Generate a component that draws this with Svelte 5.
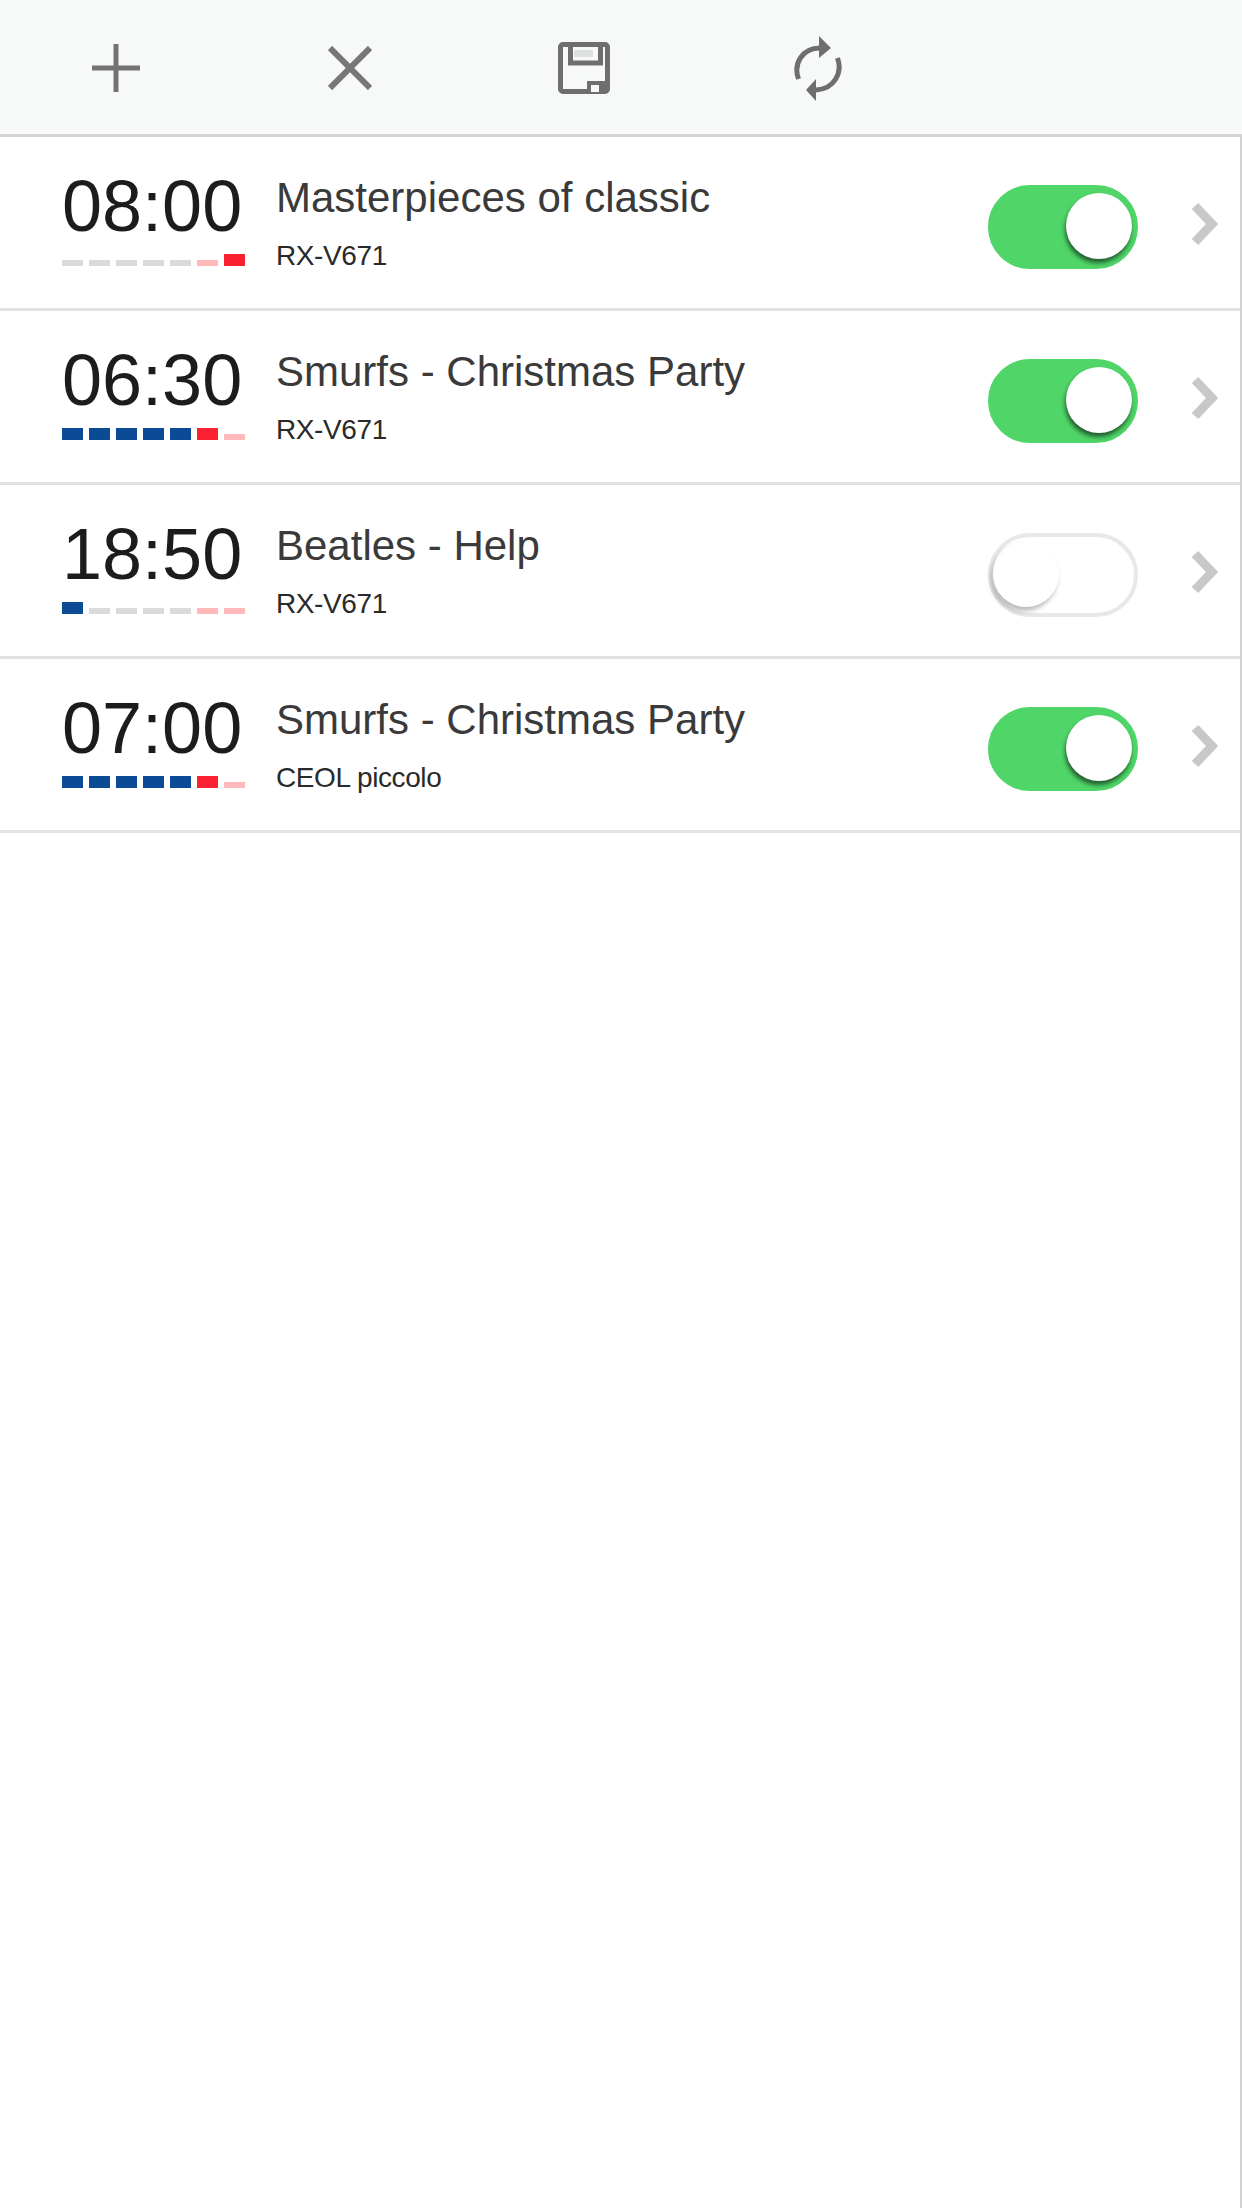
<script lang="ts">
	type Alarm = {
		time: string;
		title: string;
		device: string;
		on: boolean;
		days: string[];
	};

	// b = active weekday, g = off weekday, r = active weekend, p = off weekend
	const alarms: Alarm[] = [
		{ time: "08:00", title: "Masterpieces of classic", device: "RX-V671", on: true, days: ["g", "g", "g", "g", "g", "p", "r"] },
		{ time: "06:30", title: "Smurfs - Christmas Party", device: "RX-V671", on: true, days: ["b", "b", "b", "b", "b", "r", "p"] },
		{ time: "18:50", title: "Beatles - Help", device: "RX-V671", on: false, days: ["b", "g", "g", "g", "g", "p", "p"] },
		{ time: "07:00", title: "Smurfs - Christmas Party", device: "CEOL piccolo", on: true, days: ["b", "b", "b", "b", "b", "r", "p"] },
	];
</script>

<div class="page">
	<header class="toolbar">
		<button class="tool" aria-label="Add">
			<svg width="50" height="50" viewBox="0 0 50 50"><path d="M25 1v48M1 25h48" stroke="#737373" fill="none" stroke-width="5" /></svg>
		</button>
		<button class="tool" aria-label="Delete">
			<svg width="44" height="44" viewBox="0 0 44 44"><path d="M2 2l40 40M42 2L2 42" stroke="#777" fill="none" stroke-width="6" /></svg>
		</button>
		<button class="tool" aria-label="Save">
			<svg width="52" height="52" viewBox="0 0 52 52">
				<rect x="2.500" y="2.500" width="47" height="47" rx="2.500" stroke="#6e6e6e" fill="none" stroke-width="5" />
				<path d="M12.500 2v19h30V2" stroke="#6e6e6e" fill="none" stroke-width="5" />
				<rect x="16" y="8" width="19" height="7" fill="#dfe1e1" />
				<rect x="29" y="39" width="20" height="11" fill="#6e6e6e" />
				<rect x="33" y="43" width="8" height="7" fill="#f7f9f9" />
			</svg>
		</button>
		<button class="tool" aria-label="Refresh">
			<svg width="48" height="65" viewBox="0 0 48 65">
				<path d="M4.500 43C-1 28 8 12 26 12" stroke="#6e6e6e" fill="none" stroke-width="5" />
				<path d="M43.500 22C49 37 40 53 22 54" stroke="#6e6e6e" fill="none" stroke-width="5" />
				<path d="M25 0l12 12-12 10zM22 65L12 54l10-11z" fill="#6e6e6e" />
			</svg>
		</button>
	</header>

	<ul class="list">
		{#each alarms as alarm}
			<li class="row">
				<div class="when">
					<div class="time">{alarm.time}</div>
					<div class="days">
						{#each alarm.days as d}
							<span class="day {d}"></span>
						{/each}
					</div>
				</div>
				<div class="info">
					<div class="title">{alarm.title}</div>
					<div class="device">{alarm.device}</div>
				</div>
				<div class="toggle" class:on={alarm.on}><span class="knob"></span></div>
				<svg class="chevron" width="30" height="44" viewBox="0 0 30 44">
					<path d="M5 4l17 18L5 40" stroke="#c8c8c8" fill="none" stroke-width="9" />
				</svg>
			</li>
		{/each}
	</ul>
</div>

<style>
	:global(body) {
		margin: 0;
		background: #fff;
	}

	.page {
		height: 2208px;
		box-sizing: border-box;
		border-right: 2px solid #d2d2d2;
		font-family: "Liberation Sans", Arial, sans-serif;
	}

	.toolbar {
		display: flex;
		align-items: center;
		box-sizing: content-box;
		height: 132px;
		padding: 2px 0 0 86px;
		gap: 174px;
		background: #f7f9f9;
		border-bottom: 3px solid #d4d4d4;
		margin-right: -2px;
	}

	.tool {
		display: flex;
		justify-content: center;
		width: 60px;
		padding: 0;
		border: 0;
		background: none;
	}

	.tool svg {
		display: block;
	}

	.list {
		list-style: none;
		margin: 0;
		padding: 0;
	}

	.row {
		display: flex;
		align-items: flex-start;
		height: 171px;
		padding: 0 20px 0 62px;
		border-bottom: 3px solid #e2e2e2;
	}

	.when {
		width: 214px;
		flex: none;
		padding-top: 33px;
	}

	.time {
		font-size: 72px;
		line-height: 72px;
		color: #1c1c1c;
	}

	.days {
		display: flex;
		align-items: flex-end;
		gap: 6px;
		height: 12px;
		margin-top: 12px;
	}

	.day {
		width: 21px;
		height: 6px;
	}

	.day.b {
		height: 12px;
		background: #0b4a94;
	}

	.day.r {
		height: 12px;
		background: #fa2231;
	}

	.day.g {
		background: #dadada;
	}

	.day.p {
		background: #ffb9bd;
	}

	.info {
		flex: 1;
		padding-top: 38px;
	}

	.title {
		font-size: 42px;
		line-height: 46px;
		color: #3a3a3a;
	}

	.device {
		margin-top: 19px;
		font-size: 28px;
		line-height: 32px;
		letter-spacing: -0.4px;
		color: #2a2a2a;
	}

	.toggle {
		position: relative;
		flex: none;
		box-sizing: border-box;
		width: 150px;
		height: 84px;
		margin-top: 48px;
		border: 4px solid #e8e8e8;
		border-radius: 42px;
		background: #fff;
	}

	.toggle.on {
		border-color: #4fd568;
		background: #4fd568;
	}

	/* knob sits over the track */
	.knob {
		position: absolute;
		top: 4px;
		left: 1px;
		width: 66px;
		height: 66px;
		border-radius: 50%;
		background: #fff;
		box-shadow: -2px 4px 5px rgba(0, 0, 0, 0.28);
	}

	.toggle.on .knob {
		left: 74px;
		box-shadow: -1px 4px 4px rgba(0, 0, 0, 0.55);
	}

	.chevron {
		flex: none;
		margin-left: 52px;
		margin-top: 65px;
	}
</style>
